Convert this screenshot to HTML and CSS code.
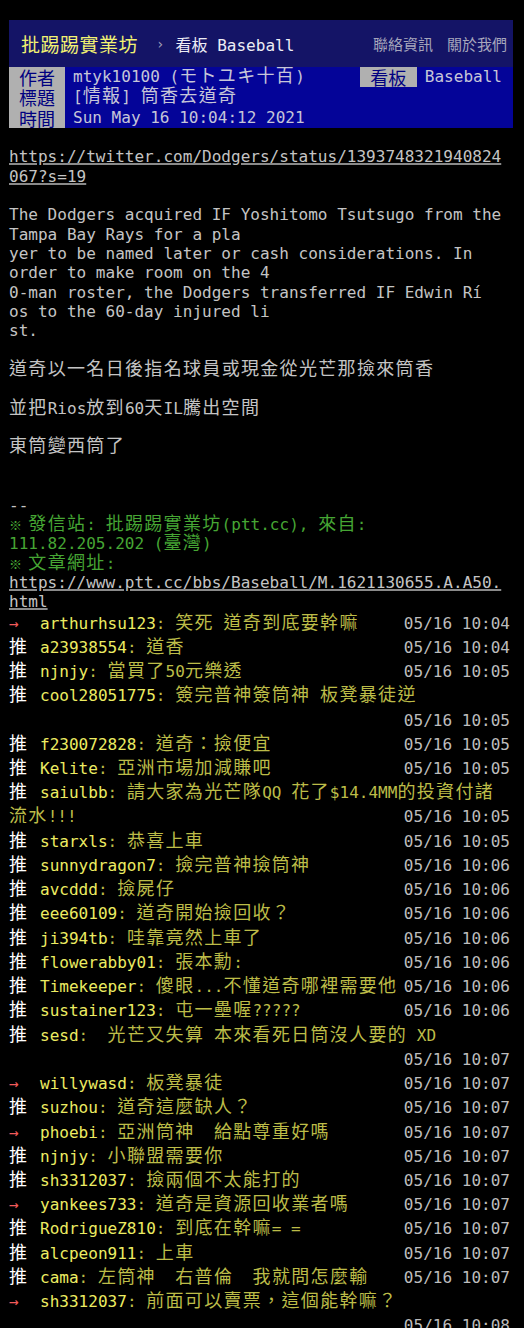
FILE: index.html
```html
<!DOCTYPE html>
<html lang="zh-Hant">
<head>
<meta charset="utf-8">
<title>[情報] 筒香去道奇 - 看板 Baseball - 批踢踢實業坊</title>
<link rel="stylesheet" href="styles.css">
</head>
<body>
<div class="page">
  <header class="topbar">
    <a class="brand">批踢踢實業坊</a>
    <span class="sep">›</span>
    <a class="board">看板 Baseball</a>
    <nav class="links"><a>聯絡資訊</a><a>關於我們</a></nav>
  </header>
  <div class="meta">
    <div class="metaline"><span class="tag">作者</span><span class="value">mtyk10100 (<span class="c">モトユキ十百</span>)</span><span class="right"><span class="tag">看板</span><span class="value">Baseball</span></span></div>
    <div class="metaline"><span class="tag">標題</span><span class="value">[<span class="c">情報</span>] <span class="c">筒香去道奇</span></span></div>
    <div class="metaline"><span class="tag">時間</span><span class="value">Sun May 16 10:04:12 2021</span></div>
  </div>
  <div class="content"><a class="link">https://twitter.com/Dodgers/status/1393748321940824
067?s=19</a>

The Dodgers acquired IF Yoshitomo Tsutsugo from the
Tampa Bay Rays for a pla
yer to be named later or cash considerations. In
order to make room on the 4
0-man roster, the Dodgers transferred IF Edwin Rí
os to the 60-day injured li
st.

<span class="c">道奇以一名日後指名球員或現金從光芒那撿來筒香</span>

<span class="c">並把</span>Rios<span class="c">放到</span>60<span class="c">天</span>IL<span class="c">騰出空間</span>

<span class="c">東筒變西筒了</span>


--
<span class="f2"><span class="kome">※</span> <span class="c">發信站</span>: <span class="c">批踢踢實業坊</span>(ptt.cc), <span class="c">來自</span>:
111.82.205.202 (<span class="c">臺灣</span>)
<span class="kome">※</span> <span class="c">文章網址</span>:</span>
<a class="link">https://www.ptt.cc/bbs/Baseball/M.1621130655.A.A50.
html</a></div>
  <div class="pushes">
    <div class="push"><span class="time">05/16 10:04</span><span class="ptag arrow">→</span><span class="uid">arthurhsu123</span><span class="txt">: <span class="c">笑死</span> <span class="c">道奇到底要幹嘛</span></span></div>
    <div class="push"><span class="time">05/16 10:04</span><span class="ptag good"><span class="c">推</span></span><span class="uid">a23938554</span><span class="txt">: <span class="c">道香</span></span></div>
    <div class="push"><span class="time">05/16 10:05</span><span class="ptag good"><span class="c">推</span></span><span class="uid">njnjy</span><span class="txt">: <span class="c">當買了</span>50<span class="c">元樂透</span></span></div>
    <div class="push"><span class="ptag good"><span class="c">推</span></span><span class="uid">cool28051775</span><span class="txt">: <span class="c">簽完普神簽筒神</span> <span class="c">板凳暴徒逆</span></span><span class="time below">05/16 10:05</span></div>
    <div class="push"><span class="time">05/16 10:05</span><span class="ptag good"><span class="c">推</span></span><span class="uid">f230072828</span><span class="txt">: <span class="c">道奇：撿便宜</span></span></div>
    <div class="push"><span class="time">05/16 10:05</span><span class="ptag good"><span class="c">推</span></span><span class="uid">Kelite</span><span class="txt">: <span class="c">亞洲市場加減賺吧</span></span></div>
    <div class="push"><span class="ptag good"><span class="c">推</span></span><span class="uid">saiulbb</span><span class="txt">: <span class="c">請大家為光芒隊</span>QQ <span class="c">花了</span>$14.4MM<span class="c">的投資付諸流水</span>!!!</span><span class="time">05/16 10:05</span></div>
    <div class="push"><span class="time">05/16 10:05</span><span class="ptag good"><span class="c">推</span></span><span class="uid">starxls</span><span class="txt">: <span class="c">恭喜上車</span></span></div>
    <div class="push"><span class="time">05/16 10:06</span><span class="ptag good"><span class="c">推</span></span><span class="uid">sunnydragon7</span><span class="txt">: <span class="c">撿完普神撿筒神</span></span></div>
    <div class="push"><span class="time">05/16 10:06</span><span class="ptag good"><span class="c">推</span></span><span class="uid">avcddd</span><span class="txt">: <span class="c">撿屍仔</span></span></div>
    <div class="push"><span class="time">05/16 10:06</span><span class="ptag good"><span class="c">推</span></span><span class="uid">eee60109</span><span class="txt">: <span class="c">道奇開始撿回收？</span></span></div>
    <div class="push"><span class="time">05/16 10:06</span><span class="ptag good"><span class="c">推</span></span><span class="uid">ji394tb</span><span class="txt">: <span class="c">哇靠竟然上車了</span></span></div>
    <div class="push"><span class="time">05/16 10:06</span><span class="ptag good"><span class="c">推</span></span><span class="uid">flowerabby01</span><span class="txt">: <span class="c">張本勳</span>:</span></div>
    <div class="push"><span class="time">05/16 10:06</span><span class="ptag good"><span class="c">推</span></span><span class="uid">Timekeeper</span><span class="txt">: <span class="c">傻眼</span>...<span class="c">不懂道奇哪裡需要他</span></span></div>
    <div class="push"><span class="time">05/16 10:06</span><span class="ptag good"><span class="c">推</span></span><span class="uid">sustainer123</span><span class="txt">: <span class="c">屯一壘喔</span>?????</span></div>
    <div class="push"><span class="ptag good"><span class="c">推</span></span><span class="uid">sesd</span><span class="txt">:  <span class="c">光芒又失算</span> <span class="c">本來看死日筒沒人要的</span> XD</span><span class="time below">05/16 10:07</span></div>
    <div class="push"><span class="time">05/16 10:07</span><span class="ptag arrow">→</span><span class="uid">willywasd</span><span class="txt">: <span class="c">板凳暴徒</span></span></div>
    <div class="push"><span class="time">05/16 10:07</span><span class="ptag good"><span class="c">推</span></span><span class="uid">suzhou</span><span class="txt">: <span class="c">道奇這麼缺人？</span></span></div>
    <div class="push"><span class="time">05/16 10:07</span><span class="ptag arrow">→</span><span class="uid">phoebi</span><span class="txt">: <span class="c">亞洲筒神　給點尊重好嗎</span></span></div>
    <div class="push"><span class="time">05/16 10:07</span><span class="ptag good"><span class="c">推</span></span><span class="uid">njnjy</span><span class="txt">: <span class="c">小聯盟需要你</span></span></div>
    <div class="push"><span class="time">05/16 10:07</span><span class="ptag good"><span class="c">推</span></span><span class="uid">sh3312037</span><span class="txt">: <span class="c">撿兩個不太能打的</span></span></div>
    <div class="push"><span class="time">05/16 10:07</span><span class="ptag arrow">→</span><span class="uid">yankees733</span><span class="txt">: <span class="c">道奇是資源回收業者嗎</span></span></div>
    <div class="push"><span class="time">05/16 10:07</span><span class="ptag good"><span class="c">推</span></span><span class="uid">RodrigueZ810</span><span class="txt">: <span class="c">到底在幹嘛</span>= =</span></div>
    <div class="push"><span class="time">05/16 10:07</span><span class="ptag good"><span class="c">推</span></span><span class="uid">alcpeon911</span><span class="txt">: <span class="c">上車</span></span></div>
    <div class="push"><span class="time">05/16 10:07</span><span class="ptag good"><span class="c">推</span></span><span class="uid">cama</span><span class="txt">: <span class="c">左筒神　右普倫　我就問怎麼輸</span></span></div>
    <div class="push"><span class="ptag arrow">→</span><span class="uid">sh3312037</span><span class="txt">: <span class="c">前面可以賣票，這個能幹嘛？</span></span><span class="time below">05/16 10:08</span></div>
  </div>
</div>
</body>
</html>
```
FILE: styles.css
```css
html, body {
  margin: 0;
  background: #000;
}

body {
  font-family: "DejaVu Sans Mono", "Noto Sans CJK TC", monospace;
  font-size: 16.05px;
  color: #c4c4c4;
}

.page {
  padding: 20px 11px 0 9px;
}

/* CJK run: double-width cells like a terminal */
.c {
  font-family: "Noto Sans CJK TC", sans-serif;
  font-size: 18px;
  letter-spacing: 1.33px;
  line-height: 0;
}

/* top bar */
.topbar {
  height: 47px;
  display: flex;
  align-items: center;
  background: #141466;
  padding: 0 6px 0 12px;
}

.brand {
  font-family: "Noto Sans CJK TC", sans-serif;
  font-size: 19px;
  letter-spacing: 0.5px;
  color: #f2f272;
}

.sep {
  margin-left: 18px;
  color: #a0a0b8;
  font-size: 14px;
}

.board {
  margin-left: 11px;
  color: #ececf4;
}

.links {
  margin-left: auto;
  display: flex;
  gap: 14px;
  font-family: "Noto Sans CJK TC", sans-serif;
  font-size: 15px;
  color: #a6a6bc;
}

/* article meta */
.metaline {
  display: flex;
  height: 20.33px;
  line-height: 20.33px;
}

.tag {
  width: 56px;
  flex: none;
  text-align: center;
  background: #b0b0b0;
  color: #000080;
  font-family: "Noto Sans CJK TC", sans-serif;
  font-size: 18px;
}

.value {
  flex: 1;
  background: #040498;
  color: #c6c6d8;
  padding-left: 8px;
  white-space: pre;
}

.right {
  display: flex;
}

.right .tag {
  width: 57px;
}

.right .value {
  flex: none;
  padding: 0 11px 0 8px;
}

/* article body */
.content {
  white-space: pre-wrap;
  line-height: 19.35px;
  padding-top: 19.35px;
}

.link {
  color: inherit;
  text-decoration: underline;
  text-decoration-color: #8a8a8a;
  text-decoration-thickness: 2px;
}

.f2 {
  color: #46a634;
}

.kome {
  display: inline-block;
  width: 9.66px;
  text-align: center;
  font-size: 13px;
  line-height: 0;
}

/* pushes */
.pushes {
  margin-right: 3px;
}

.push {
  white-space: pre-wrap;
  line-height: 24.24px;
}

.ptag {
  display: inline-block;
  width: 31px;
}

.ptag.good {
  color: #fff;
}

.ptag.arrow {
  color: #f25a5a;
}

.uid {
  color: #ecec62;
}

.txt {
  color: #bcbc48;
}

.time {
  float: right;
  color: #bdbdbd;
}

.time.below {
  float: none;
  display: block;
  text-align: right;
}
```
